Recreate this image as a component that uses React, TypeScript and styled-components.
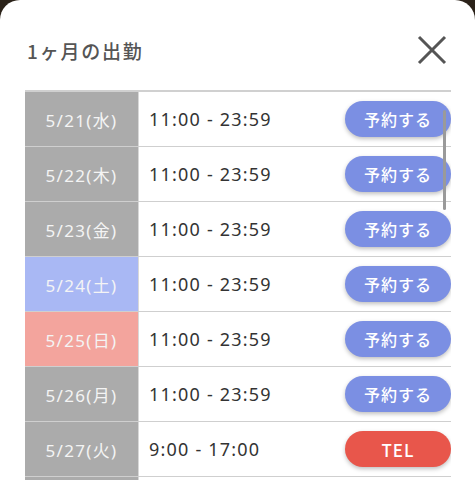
import React from "react";
import styled, { createGlobalStyle } from "styled-components";

const Global = createGlobalStyle`
  html, body { margin: 0; padding: 0; background: #2b2219; }
  body { font-family: "Noto Sans", "Noto Sans CJK JP", sans-serif; }
  * { box-sizing: border-box; }
`;

const Sheet = styled.div`
  width: 475px;
  height: 480px;
  background: #fff;
  border-radius: 20px 20px 0 0;
  overflow: hidden;
  display: flex;
  flex-direction: column;
`;

const Header = styled.div`
  height: 90px;
  display: flex;
  align-items: center;
  justify-content: space-between;
  padding: 10px 28px 0 27px;
`;

const Title = styled.h2`
  margin: 0;
  font-family: "Noto Sans CJK JP", sans-serif;
  font-size: 19px;
  font-weight: 500;
  color: #555;
  letter-spacing: 1.8px;
`;

const CloseBtn = styled.button`
  border: 0;
  background: none;
  padding: 0;
  width: 30px;
  height: 30px;
  display: flex;
  align-items: center;
  justify-content: center;
  cursor: pointer;
`;

const TableWrap = styled.div`
  position: relative;
  margin: 0 24px 0 25px;
  border-top: 2px solid #d0d0d0;
  flex: 1;
  overflow: hidden;
`;

const Row = styled.div`
  display: grid;
  grid-template-columns: 114px 1fr auto;
  align-items: stretch;
  height: 55px;
  border-bottom: 1px solid #cfcfcf;
`;

const DateCell = styled.div<{ $kind: "weekday" | "sat" | "sun" }>`
  background: ${(p) =>
    p.$kind === "sat" ? "#a9b8f4" : p.$kind === "sun" ? "#f3a49d" : "#ababab"};
  color: #f4f4f4;
  font-size: 17px;
  letter-spacing: 1.3px;
  display: flex;
  align-items: center;
  justify-content: center;
  border-right: 1px solid #d8d8d8;
`;

const TimeCell = styled.div`
  display: flex;
  align-items: center;
  padding-left: 10px;
  font-size: 18px;
  letter-spacing: 1.2px;
  color: #333;
`;

const ActionCell = styled.div`
  display: flex;
  align-items: center;
  justify-content: flex-end;
`;

const Pill = styled.button<{ $tel?: boolean }>`
  width: 106px;
  height: 36px;
  border: 0;
  border-radius: 18px;
  background: ${(p) => (p.$tel ? "#e8564b" : "#7b8fe3")};
  color: #fff;
  font-family: "Noto Sans CJK JP", sans-serif;
  font-size: ${(p) => (p.$tel ? "17px" : "16px")};
  font-weight: 500;
  letter-spacing: 1px;
  box-shadow: 0 2px 4px rgba(0, 0, 0, 0.25);
  cursor: pointer;
  padding: 0;
`;

const ScrollThumb = styled.div`
  position: absolute;
  right: 5px;
  top: 18px;
  width: 3px;
  height: 100px;
  background: #9a9a9a;
  border-radius: 2px;
`;

type Item = { date: string; kind: "weekday" | "sat" | "sun"; time: string; tel?: boolean };

const items: Item[] = [
  { date: "5/21(水)", kind: "weekday", time: "11:00 - 23:59" },
  { date: "5/22(木)", kind: "weekday", time: "11:00 - 23:59" },
  { date: "5/23(金)", kind: "weekday", time: "11:00 - 23:59" },
  { date: "5/24(土)", kind: "sat", time: "11:00 - 23:59" },
  { date: "5/25(日)", kind: "sun", time: "11:00 - 23:59" },
  { date: "5/26(月)", kind: "weekday", time: "11:00 - 23:59" },
  { date: "5/27(火)", kind: "weekday", time: "9:00 - 17:00", tel: true },
];

export default function App() {
  return (
    <>
      <Global />
      <Sheet>
        <Header>
          <Title>1ヶ月の出勤</Title>
          <CloseBtn aria-label="close">
            <svg width="30" height="30" viewBox="0 0 30 30">
              <path d="M2 2 L28 28 M28 2 L2 28" stroke="#555" strokeWidth="3" fill="none" />
            </svg>
          </CloseBtn>
        </Header>
        <TableWrap>
          {items.map((it) => (
            <Row key={it.date}>
              <DateCell $kind={it.kind}>{it.date}</DateCell>
              <TimeCell>{it.time}</TimeCell>
              <ActionCell>
                <Pill $tel={it.tel}>{it.tel ? "TEL" : "予約する"}</Pill>
              </ActionCell>
            </Row>
          ))}
          <Row aria-hidden>
            <DateCell $kind="weekday" />
            <TimeCell />
            <ActionCell />
          </Row>
          <ScrollThumb />
        </TableWrap>
      </Sheet>
    </>
  );
}
